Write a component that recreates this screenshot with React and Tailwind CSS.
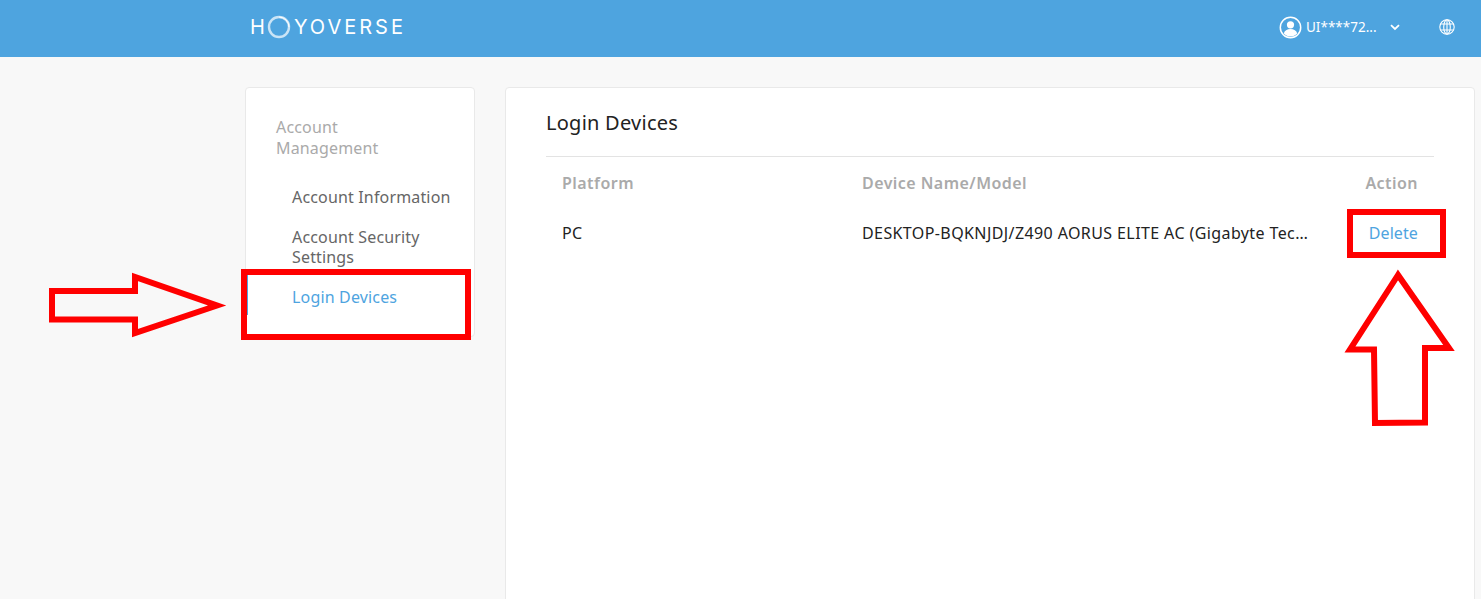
import React from "react";

const font = { fontFamily: '"Noto Sans", "Open Sans", sans-serif' };

function Logo() {
  return (
    <div className="flex items-center h-[53px] text-white text-[20px] font-normal leading-none" style={{ fontFamily: '"Inter", sans-serif' }}>
      <span className="ml-[5px]">H</span>
      <svg width="26" height="26" viewBox="0 0 26 26" className="ml-[1px]">
        <circle cx="13" cy="13" r="10" fill="none" stroke="#ffffff" strokeWidth="2.4" opacity="0.7" />
        <path d="M13 3a10 10 0 0 1 10 10" fill="none" stroke="#ffffff" strokeWidth="1" />
      </svg>
      <span className="ml-[2px] tracking-[3px]">YOVERSE</span>
    </div>
  );
}

function UserIcon() {
  return (
    <svg width="23" height="23" viewBox="0 0 23 23" fill="none">
      <circle cx="11.5" cy="11.5" r="10.2" stroke="#fff" strokeWidth="1.5" />
      <circle cx="11.5" cy="8.8" r="3.6" fill="#fff" />
      <path d="M4.8 17.6c.6-3 3.4-4.600 6.700-4.600s6.100 1.600 6.700 4.600c-1.800 1.900-4.100 3-6.700 3s-4.900-1.100-6.700-3z" fill="#fff" />
    </svg>
  );
}

function Globe() {
  return (
    <svg width="16" height="16" viewBox="0 0 16 16" fill="none" stroke="#fff" strokeWidth="1.1">
      <circle cx="8" cy="8" r="7.2" />
      <ellipse cx="8" cy="8" rx="3.3" ry="7.2" />
      <path d="M8 .8v14.400M1.500 5h13M1.500 11h13" />
    </svg>
  );
}

function Chevron() {
  return (
    <svg width="10" height="7" viewBox="0 0 10 7" fill="none" stroke="#fff" strokeWidth="1.800">
      <path d="M1 1.200l4 3.800 4-3.800" />
    </svg>
  );
}

export default function App() {
  return (
    <div className="relative w-[1481px] h-[599px] overflow-hidden bg-[#f8f8f8]" style={font}>
      <header className="h-[57px] bg-[#4ea4df] flex items-center pl-[245px] pr-[26px] justify-between">
        <div className="self-start"><Logo /></div>
        <div className="flex items-center text-white text-[14px] -mt-[3px]">
          <UserIcon />
          <span className="ml-[4px] w-[68px] text-[13.5px] whitespace-nowrap">UI****72...</span>
          <span className="ml-[16px] flex"><Chevron /></span>
          <span className="ml-[39px] flex"><Globe /></span>
        </div>
      </header>

      <main className="flex items-start pl-[245px] pt-[30px] gap-[30px]">
        <aside className="w-[230px] h-[250px] bg-white border border-[#e9e9e9] rounded-[4px] pl-[30px] pr-[16px] pt-[29px] text-[16px] tracking-[0.16px]">
          <div className="text-[#aaaaaa] leading-[21px] w-[130px]">Account Management</div>
          <nav className="pl-[16px] mt-[28px] text-[#666666] leading-[20px] flex flex-col gap-[20px]">
            <div className="whitespace-nowrap">Account Information</div>
            <div>Account Security Settings</div>
            <div className="relative text-[#4ea4df]">
              Login Devices
              <span className="absolute -left-[46px] -top-[12px] w-[2px] h-[40px] bg-[#4ea4df]" />
            </div>
          </nav>
        </aside>

        <section className="w-[970px] h-[520px] bg-white border border-[#e9e9e9] rounded-[4px] pl-[40px] pr-[40px] pt-[21px]">
          <h1 className="text-[20px] tracking-[0.25px] leading-[27px] text-[#222222] pb-[20px] border-b border-[#e3e3e3]">Login Devices</h1>
          <div className="flex items-center h-[52px] px-[16px] text-[16px] font-semibold tracking-[0.45px] text-[#aaaaaa]">
            <div className="w-[300px]">Platform</div>
            <div className="flex-1">Device Name/Model</div>
            <div>Action</div>
          </div>
          <div className="flex items-center h-[48px] px-[16px] text-[16px] tracking-[0.4px] text-[#222222]">
            <div className="w-[300px]">PC</div>
            <div className="w-[448px] truncate">DESKTOP-BQKNJDJ/Z490 AORUS ELITE AC (Gigabyte Technology Co., Ltd.)</div>
            <div className="ml-auto tracking-[0.1px] text-[#4ea4df]">Delete</div>
          </div>
        </section>
      </main>

      {/* Annotations drawn over the page */}
      <div className="absolute left-[241px] top-[269px] w-[230px] h-[71px] border-[6px] border-[#ff0000]" />
      <div className="absolute left-[1347px] top-[209px] w-[99px] h-[49px] border-[6px] border-[#ff0000]" />
      <svg className="absolute left-0 top-0 pointer-events-none" width="1481" height="599" fill="none" stroke="#ff0000" strokeWidth="6" strokeLinejoin="miter">
        <path d="M52 291H135V277L217 305.500 135 333V319.500H52Z" />
        <path d="M1398 275L1350 349.500H1374L1375 423 1425 422.500 1425 348H1449Z" />
      </svg>
    </div>
  );
}
